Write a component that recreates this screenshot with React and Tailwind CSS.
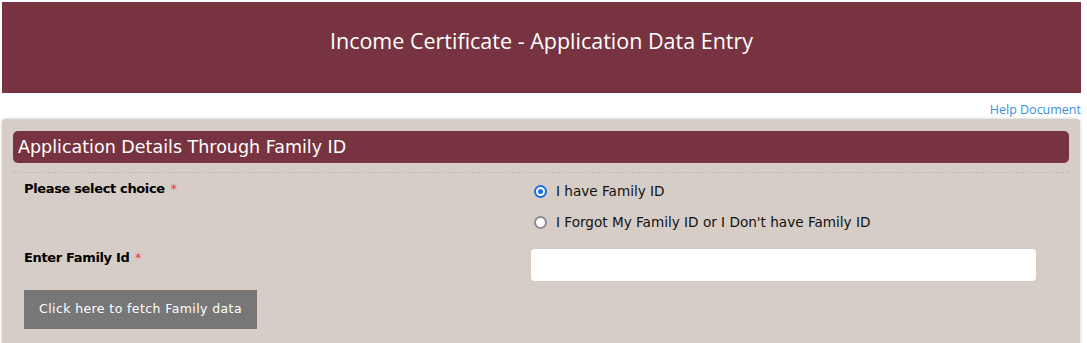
export default function App() {
  const body = { fontFamily: '"DejaVu Sans", Verdana, sans-serif' };
  return (
    <div className="w-[1087px] h-[343px] overflow-hidden bg-white">
      <div className="ml-[2px] mr-[6px] mt-[2px] h-[91px] bg-[#773340] flex items-center justify-center">
        <h1 className="text-white text-[21.5px] leading-none -mt-[14px]" style={{ fontFamily: '"Open Sans", sans-serif' }}>
          Income Certificate - Application Data Entry
        </h1>
      </div>
      <div className="flex justify-end pr-[6px] h-[26px] items-center pt-[8px]">
        <a className="text-[#3a8fd6] text-[12.5px] leading-none" style={{ fontFamily: '"Open Sans", sans-serif' }}>Help Document</a>
      </div>
      <div className="ml-[2px] mr-[7px] bg-[#d6cdc7] rounded-[4px] shadow-[0_0_3px_rgba(0,0,0,0.25)] px-[11px] pt-[12px] h-[240px]" style={body}>
        <div className="h-[32px] bg-[#773340] rounded-[5px] flex items-center pl-[5px]">
          <span className="text-white text-[17.5px]">Application Details Through Family ID</span>
        </div>
        <div className="mt-[9px] border-t border-dashed border-[#c2bbb6]"></div>
        <div className="flex pl-[11px]">
          <div className="w-[507px] pt-[6px] text-[13px] tracking-[-0.35px] font-bold text-black">
            Please select choice<span className="text-[#e53935] font-normal text-[12px] ml-[6px]">*</span>
          </div>
          <div className="flex flex-col gap-[11px] pt-[8px] text-[13.6px] text-[#111]">
            <label className="flex items-center gap-[9px] pl-[3px]">
              <span className="w-[13px] h-[13px] rounded-full border-[2px] border-[#1a6fe0] bg-white flex items-center justify-center">
                <span className="w-[5px] h-[5px] rounded-full bg-[#1a6fe0]"></span>
              </span>
              I have Family ID
            </label>
            <label className="flex items-center gap-[9px] pl-[3px]">
              <span className="w-[13px] h-[13px] rounded-full border-[2px] border-[#8f8a92] bg-white"></span>
              I Forgot My Family ID or I Don't have Family ID
            </label>
          </div>
        </div>
        <div className="flex pl-[11px] mt-[16px]">
          <div className="w-[507px] pt-[1px] leading-[16px] text-[13px] tracking-[-0.35px] font-bold text-black">
            Enter Family Id<span className="text-[#e53935] font-normal text-[12px] ml-[6px]">*</span>
          </div>
          <input className="w-[505px] h-[32px] bg-white rounded-[4px] outline-none border-0" />
        </div>
        <button className="ml-[11px] mt-[9px] w-[233px] h-[39px] bg-[#777777] text-white text-[12.5px] tracking-[0.4px]">
          Click here to fetch Family data
        </button>
      </div>
    </div>
  );
}
